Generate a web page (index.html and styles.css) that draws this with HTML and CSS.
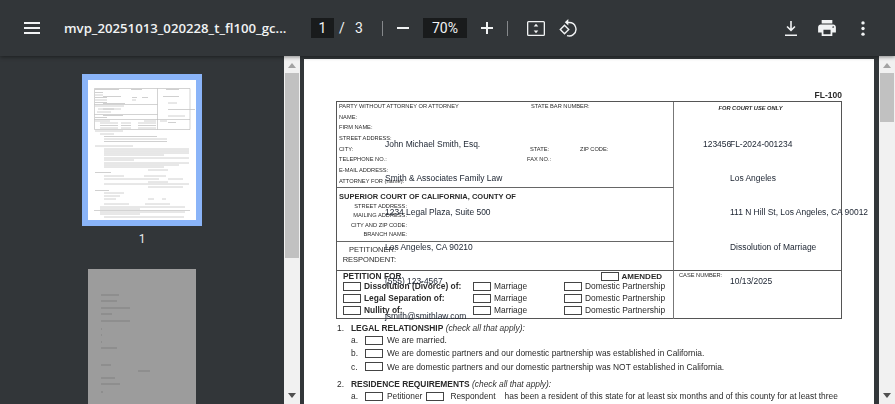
FILE: index.html
```html
<!DOCTYPE html>
<html lang="en">
<head>
    <meta charset="UTF-8">
    <title>mvp_20251013_020228_t_fl100_gc.pdf</title>
    <link rel="stylesheet" href="styles.css">
</head>
<body>

<header class="toolbar">
    <svg class="icon menu-icon" viewBox="0 0 16 12"><path d="M0 0h16v2H0zM0 5h16v2H0zM0 10h16v2H0z"/></svg>
    <span class="doc-title">mvp_20251013_020228_t_fl100_gc...</span>
    <span class="num-box page-box">1</span>
    <span class="slash">/</span>
    <span class="page-total">3</span>
    <span class="sep sep-a"></span>
    <svg class="icon minus-icon" viewBox="0 0 12 2"><path d="M0 0h12v2H0z"/></svg>
    <span class="num-box zoom-box">70%</span>
    <svg class="icon plus-icon" viewBox="0 0 12 12"><path d="M5 0h2v5h5v2H7v5H5V7H0V5h5z"/></svg>
    <span class="sep sep-b"></span>
    <svg class="icon fit-icon" viewBox="0 0 18 15"><path d="M1.500 0h15A1.500 1.500 0 0 1 18 1.500v12a1.500 1.500 0 0 1-1.500 1.500h-15A1.500 1.500 0 0 1 0 13.500v-12A1.500 1.500 0 0 1 1.500 0zm0 1.300a.2.2 0 0 0-.2.2v12c0 .1.1.2.2.2h15a.2.2 0 0 0 .2-.2v-12a.2.2 0 0 0-.2-.2z"/><path d="M9 2.800l2.300 2.700H6.700zM9 12.200L6.700 9.500h4.600z"/></svg>
    <svg class="icon rotate-icon" viewBox="0 0 18 18"><path class="line" d="M5.500 6.300L1.300 10.500l4.200 4.200 4.200-4.200z"/><path class="line" d="M7.500 3.500h2.700a6.700 6.700 0 0 1 4 12.100 6.700 6.700 0 0 1-6.200 1"/><path d="M9.300 0v6.600L5.800 3.300z"/></svg>
    <svg class="icon download-icon" viewBox="0 0 12 15"><path d="M5.200 0h1.600v7.500l2.600-2.500 1.100 1.100L6 10.500 1.500 6.100 2.600 5l2.600 2.500z"/><path d="M0 13.500h12V15H0z"/></svg>
    <svg class="icon print-icon" viewBox="2 3 20 18"><path d="M19 8H5c-1.660 0-3 1.340-3 3v6h4v4h12v-4h4v-6c0-1.660-1.340-3-3-3zm-3 11H8v-5h8v5zm3-7c-.55 0-1-.45-1-1s.45-1 1-1 1 .45 1 1-.45 1-1 1zm-1-9H6v4h12V3z"/></svg>
    <svg class="icon dots-icon" viewBox="0 0 4 16"><circle cx="2" cy="2" r="1.800"/><circle cx="2" cy="8" r="1.800"/><circle cx="2" cy="14" r="1.800"/></svg>
</header>

<main class="content">
    <aside class="sidebar">
        <div class="thumb-list">
            <div class="thumb-sel">
                <svg class="thumb-page" viewBox="0 0 108 140">
                    <path class="t-rule" d="M6.500 8.500h95.500v41H6.500zM69.500 8.500v41M6.500 24.500h63M6.500 34.500h63M6.500 39.500h95.500M6 130.500h96"/>
                    <path class="t-text" d="M7 9.500h24M43 9.500h11M7 12.500h8M7 15h8M7 17.500h12M15 16.500h18M44 17.500h5M54 17.500h6M7 20h12M44 20h4M7 22.500h12M15 23.500h22M7 26h29M10 29h16M15 29h18M9 32h14M15 35.500h20M7 37.500h12M78 9.500h13M75 16.500h16M80 23h9M80 29.500h27M80 36h17M7 41h15M56 41h12M72 41h7M80 42.500h8M12 43h18M33 43h10M50 43h18M12 45.500h18M33 45.500h10M50 45.500h18M12 48h18M33 48h10M50 48h18M7 51h28M12 54h14M16 56.500h53M16 59h63M16 61.500h63M7 66h38M16 69h85M16 71h85M16 73h85M16 75h60M16 78h85M16 80h30M16 83h85M16 85h75M16 87h60M60 90h20M7 92.500h16M16 96h20M56 96h22M16 99h55M80 99h15M60 102h20M16 104h85M60 107h20M80 107h15M7 110.500h14M16 113h20M16 116h16M16 119h12M60 119h6M74 119h4M16 124h25M57 124h25M12 127h85M12 129h40M12 132h85M12 134h40M16 137h80"/>
                </svg>
            </div>
            <div class="thumb-num">1</div>
            <svg class="thumb-page thumb-dim" viewBox="0 0 108 140">
                <path class="t-text-dark" d="M13 26h18M13 32h16M13 39h29M13 45h11M13 52h29M13 60h1M13 66h1M13 73h1M13 79h16M13 96h10M50 102h12M13 109h14M13 115h19M13 123h2"/>
            </svg>
        </div>
        <div class="scrollbar">
            <span class="arrow-up"></span>
            <span class="thumb thumb-left"></span>
            <span class="arrow-down"></span>
        </div>
    </aside>

    <section class="viewer">
        <div class="page">
            <div class="form-id">FL-100</div>

            <div class="form-box">
                <div class="cell attorney">
                    <div class="lbl-row"><span class="c-party">PARTY WITHOUT ATTORNEY OR ATTORNEY</span><span>STATE BAR NUMBER:</span></div>
                    <div class="lbl-row">NAME:</div>
                    <div class="lbl-row">FIRM NAME:</div>
                    <div class="lbl-row">STREET ADDRESS:</div>
                    <div class="lbl-row"><span class="c-city">CITY:</span><span class="c-state">STATE:</span><span>ZIP CODE:</span></div>
                    <div class="lbl-row"><span class="c-tel">TELEPHONE NO.:</span><span>FAX NO.:</span></div>
                    <div class="lbl-row">E-MAIL ADDRESS:</div>
                    <div class="lbl-row">ATTORNEY FOR (name):</div>
                </div>
                <div class="cell court-use">FOR COURT USE ONLY</div>
                <div class="cell court">
                    <div class="court-title">SUPERIOR COURT OF CALIFORNIA, COUNTY OF</div>
                    <div class="court-row">STREET ADDRESS:</div>
                    <div class="court-row">MAILING ADDRESS:</div>
                    <div class="court-row">CITY AND ZIP CODE:</div>
                    <div class="court-row">BRANCH NAME:</div>
                </div>
                <div class="cell parties">
                    <div class="party-row">PETITIONER:</div>
                    <div class="party-row">RESPONDENT:</div>
                </div>
                <div class="cell petition">
                    <div class="petition-head"><b>PETITION FOR</b><span class="amended"><i class="box"></i><b>AMENDED</b></span></div>
                    <div class="petition-row"><span class="opt"><i class="box"></i><b>Dissolution (Divorce) of:</b></span><span class="opt"><i class="box"></i>Marriage</span><span class="opt"><i class="box"></i>Domestic Partnership</span></div>
                    <div class="petition-row"><span class="opt"><i class="box"></i><b>Legal Separation of:</b></span><span class="opt"><i class="box"></i>Marriage</span><span class="opt"><i class="box"></i>Domestic Partnership</span></div>
                    <div class="petition-row"><span class="opt"><i class="box"></i><b>Nullity of:</b></span><span class="opt"><i class="box"></i>Marriage</span><span class="opt"><i class="box"></i>Domestic Partnership</span></div>
                </div>
                <div class="cell case-no">CASE NUMBER:</div>
            </div>

            <div class="sec"><span class="sec-n">1.</span><b>LEGAL RELATIONSHIP</b>&nbsp;<em>(check all that apply):</em></div>
            <div class="item"><span class="item-n">a.</span><i class="box"></i>We are married.</div>
            <div class="item"><span class="item-n">b.</span><i class="box"></i>We are domestic partners and our domestic partnership was established in California.</div>
            <div class="item"><span class="item-n">c.</span><i class="box"></i>We are domestic partners and our domestic partnership was NOT established in California.</div>
            <div class="sec sec-two"><span class="sec-n">2.</span><b>RESIDENCE REQUIREMENTS</b>&nbsp;<em>(check all that apply):</em></div>
            <div class="item item-short"><span class="item-n">a.</span><i class="box"></i>Petitioner<i class="box box-mid"></i>Respondent<span class="has-been">has been a resident of this state for at least six months and of this county for at least three</span></div>
            <div class="item item-short item-cont">months immediately preceding the filing of this Petition. (For a divorce, unless you are in the legal relationship described</div>

            <!-- filled in values sit on top of the form -->
            <span class="fill f-name">John Michael Smith, Esq.</span>
            <span class="fill f-firm">Smith &amp; Associates Family Law</span>
            <span class="fill f-street">1234 Legal Plaza, Suite 500</span>
            <span class="fill f-city">Los Angeles, CA 90210</span>
            <span class="fill f-phone">(555) 123-4567</span>
            <span class="fill f-email">jsmith@smithlaw.com</span>
            <span class="fill f-bar">123456</span>
            <span class="fill f-case">FL-2024-001234</span>
            <span class="fill f-county">Los Angeles</span>
            <span class="fill f-court">111 N Hill St, Los Angeles, CA 90012</span>
            <span class="fill f-type">Dissolution of Marriage</span>
            <span class="fill f-date">10/13/2025</span>
        </div>
        <div class="scrollbar">
            <span class="arrow-up"></span>
            <span class="thumb thumb-right"></span>
            <span class="arrow-down"></span>
        </div>
    </section>
</main>

</body>
</html>
```

FILE: styles.css
```css
* {
    box-sizing: border-box;
}
html, body {
    margin: 0;
    height: 100%;
    overflow: hidden;
}
body {
    display: flex;
    flex-direction: column;
    background-color: #323639;
    font-family: "Liberation Sans", Arial, sans-serif;
}

/* toolbar */
.toolbar {
    position: relative;
    z-index: 2;
    display: flex;
    align-items: center;
    flex: 0 0 56px;
    background-color: #323639;
    color: #f1f3f4;
    box-shadow: 0 1px 4px rgba(0, 0, 0, 0.45);
    font-family: Roboto, sans-serif;
    font-size: 14px;
}
.icon {
    flex: none;
    fill: #f1f3f4;
}
.menu-icon { width: 16px; height: 12px; margin-left: 24px; }
.doc-title {
    width: 225px;
    margin-left: 24px;
    font-family: "Open Sans", sans-serif;
    font-size: 13.2px;
    font-weight: 600;
    white-space: nowrap;
}
.num-box {
    height: 20px;
    background-color: #191b1c;
    line-height: 20px;
    text-align: center;
}
.page-box { width: 23px; margin-left: 22px; }
.slash { margin-left: 5px; width: 8px; }
.page-total { margin-left: 8px; width: 10px; }
.sep {
    width: 1px;
    height: 15px;
    background-color: #85888b;
}
.sep-a { margin-left: 17px; }
.minus-icon { width: 12px; height: 2px; margin-left: 14px; }
.zoom-box { width: 44px; margin-left: 14px; }
.plus-icon { width: 12px; height: 12px; margin-left: 14px; }
.sep-b { margin-left: 14px; }
.fit-icon { width: 18px; height: 15px; margin-left: 19px; }
.rotate-icon { width: 18px; height: 18px; margin-left: 14px; }
.rotate-icon .line { fill: none; stroke: #f1f3f4; stroke-width: 1.4; }
.download-icon { width: 12px; height: 15px; margin-left: 208px; }
.print-icon { width: 18px; height: 16px; margin-left: 21px; }
.dots-icon { width: 4px; height: 15px; margin-left: 25px; }

/* main split */
.content {
    display: flex;
    flex: 1;
    min-height: 0;
}
.sidebar {
    display: flex;
    flex: 0 0 300px;
    overflow: hidden;
}
.thumb-list {
    display: flex;
    flex-direction: column;
    align-items: center;
    flex: 0 0 284px;
    padding-top: 18px;
}
.thumb-sel {
    flex: none;
    padding: 6px;
    background-color: #8ab4f8;
    line-height: 0;
}
.thumb-page {
    display: block;
    flex: none;
    width: 108px;
    height: 140px;
    background-color: #fff;
}
.thumb-dim { background-color: #9c9c9c; }
.t-rule { fill: none; stroke: #b5b5b5; stroke-width: 0.6; filter: blur(0.2px); }
.t-text { fill: none; stroke: #c4c4c4; stroke-width: 0.8; filter: blur(0.35px); }
.t-text-dark { fill: none; stroke: #777; stroke-width: 0.7; filter: blur(0.3px); }
.thumb-num {
    flex: none;
    height: 43px;
    padding-top: 5px;
    color: #e8eaed;
    font-family: Roboto, sans-serif;
    font-size: 12px;
    line-height: 17px;
}

/* scrollbars */
.scrollbar {
    display: flex;
    flex-direction: column;
    align-items: center;
    flex: 0 0 16px;
    background-color: #f1f1f1;
}
.thumb {
    width: 14px;
    flex: none;
    background-color: #c1c1c1;
}
.thumb-left { height: 185px; margin-top: 5px; }
.thumb-right { height: 49px; margin-top: 5px; }
.arrow-up {
    flex: none;
    margin-top: 7px;
    border-left: 4px solid transparent;
    border-right: 4px solid transparent;
    border-bottom: 5px solid #a3a3a3;
}
.arrow-down {
    flex: none;
    margin-top: auto;
    margin-bottom: 6px;
    border-left: 4px solid transparent;
    border-right: 4px solid transparent;
    border-top: 5px solid #505050;
}

/* pdf page */
.viewer {
    display: flex;
    flex: 1;
    justify-content: space-between;
    min-width: 0;
    padding-left: 4px;
}
.page {
    position: relative;
    flex: 0 0 570px;
    height: 800px;
    margin-top: 3px;
    padding: 30px 32px 0;
    background-color: #fff;
    color: #2a2a2a;
    font-size: 8.4px;
    overflow: hidden;
    filter: blur(0.2px);
}
.form-id {
    height: 12px;
    font-size: 8.5px;
    font-weight: bold;
    line-height: 12px;
    text-align: right;
}
.form-box {
    display: grid;
    grid-template-columns: 337px 1fr;
    grid-template-rows: 86px 54px 28px 49px;
    width: 506px;
    height: 218px;
    border: 1px solid #555;
}
.cell {
    min-width: 0;
}
.attorney {
    padding: 0 0 0 2px;
    border-bottom: 1px solid #666;
    border-right: 1px solid #777;
    font-size: 5.7px;
}
.lbl-row {
    display: flex;
    height: 10.7px;
    line-height: 8px;
    white-space: nowrap;
}
.c-party { width: 192px; }
.c-city { width: 191px; }
.c-state { width: 50px; }
.c-tel { width: 188px; }
.court-use {
    grid-row: 1 / 4;
    grid-column: 2;
    padding: 3px 14px 0 0;
    font-size: 5.7px;
    font-style: italic;
    font-weight: bold;
    text-align: center;
}
.court {
    border-bottom: 1px solid #666;
    border-right: 1px solid #777;
    grid-row: 2;
    grid-column: 1;
}
.court-title {
    height: 14px;
    padding-left: 2px;
    font-size: 7.5px;
    font-weight: bold;
    line-height: 17px;
    white-space: nowrap;
}
.court-row {
    width: 70px;
    height: 9.4px;
    font-size: 5.7px;
    line-height: 9px;
    text-align: right;
    white-space: nowrap;
}
.parties {
    grid-row: 3;
    grid-column: 1;
    border-right: 1px solid #777;
    font-size: 7.5px;
}
.party-row {
    width: 59px;
    height: 9.500px;
    padding-top: 3px;
    line-height: 9px;
    text-align: right;
}
.petition {
    grid-row: 4;
    grid-column: 1;
    border-top: 1px solid #555;
    border-right: 1px solid #777;
    padding-left: 6px;
    line-height: 11px;
}
.petition-head {
    display: flex;
    justify-content: space-between;
    height: 10px;
    padding-right: 11px;
}
.amended {
    display: flex;
    align-items: center;
    font-size: 8px;
}
.amended .box { margin-right: 3px; }
.petition-row {
    display: grid;
    grid-template-columns: 130px 91px 1fr;
    height: 11.7px;
}
.opt {
    display: flex;
    align-items: center;
    white-space: nowrap;
}
.opt .box { margin-right: 3px; }
.box {
    display: inline-block;
    flex: none;
    width: 18px;
    height: 9px;
    border: 1px solid #444;
}
.case-no {
    grid-row: 4;
    grid-column: 2;
    border-top: 1px solid #555;
    padding: 1px 0 0 5px;
    font-size: 5.7px;
}
.sec {
    display: flex;
    height: 12px;
    margin-top: 2.5px;
    line-height: 12px;
    white-space: pre;
}
.sec-two { margin-top: 5px; }
.sec-n { width: 15px; padding-left: 1px; }
.sec em { color: #333; }
.item {
    display: flex;
    align-items: center;
    height: 13.3px;
    padding-left: 15px;
    white-space: nowrap;
}
.item-short { height: 12px; }
.item-n { width: 14px; }
.item .box { margin-right: 4px; }
.item .box-mid { margin-left: 4px; margin-right: 6px; }
.has-been { margin-left: 9px; }
.item-cont { padding-left: 52px; }

/* values drawn over the form */
.fill {
    position: absolute;
    color: #1b2330;
    font-size: 8.45px;
    line-height: 11px;
    white-space: nowrap;
}
.f-name, .f-firm, .f-street, .f-city, .f-phone, .f-email { left: 81px; }
.f-case, .f-county, .f-court, .f-type, .f-date { left: 426px; }
.f-bar { left: 399px; }
.f-name, .f-bar, .f-case { top: 80px; }
.f-firm, .f-county { top: 114px; }
.f-street, .f-court { top: 148px; }
.f-city, .f-type { top: 183px; }
.f-phone, .f-date { top: 217px; }
.f-email { top: 252px; }
```
